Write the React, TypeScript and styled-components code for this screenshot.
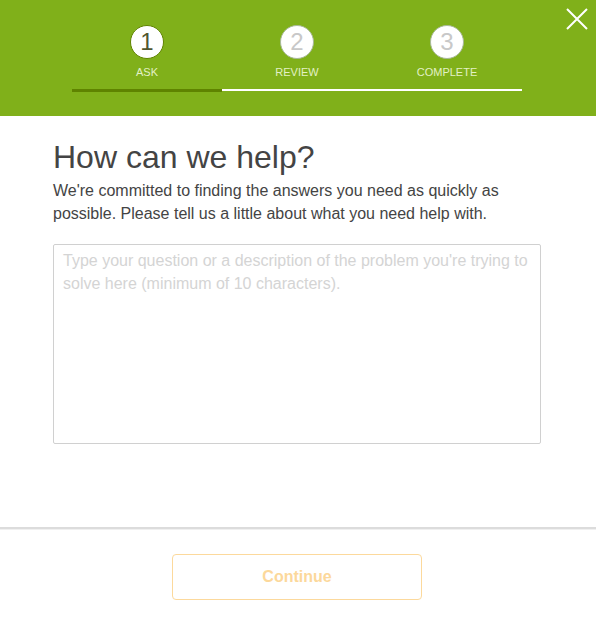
import React, { useState } from 'react'
import styled, { createGlobalStyle } from 'styled-components'

const GlobalStyle = createGlobalStyle`
    html, body {
        margin: 0;
        padding: 0;
        background: #fff;
        font-family: "Liberation Sans", Arial, Helvetica, sans-serif;
    }
`

const steps = ['Ask', 'Review', 'Complete']

const Page = styled.div`
    width: 596px;
    height: 624px;
    display: flex;
    flex-direction: column;
    overflow: hidden;
`

const Header = styled.header`
    position: relative;
    height: 116px;
    background: #80b01a;
    padding: 25px 74px 0 72px;
    box-sizing: border-box;
`

const Close = styled.button`
    position: absolute;
    top: 7px;
    right: 7px;
    width: 24px;
    height: 24px;
    padding: 0;
    border: none;
    background: transparent;
    cursor: pointer;
`

const Steps = styled.ol`
    display: grid;
    grid-template-columns: repeat(3, 1fr);
    margin: 0;
    padding: 0;
    list-style: none;
`

const Step = styled.li<{ $active: boolean }>`
    display: flex;
    flex-direction: column;
    align-items: center;
    position: relative;
    padding-bottom: 10px;

    &::after {
        content: '';
        position: absolute;
        left: 0;
        right: 0;
        bottom: ${p => (p.$active ? '-3px' : '-2px')};
        height: ${p => (p.$active ? '3px' : '2px')};
        background: ${p => (p.$active ? '#5f8300' : '#ffffff')};
    }
`

const Circle = styled.span<{ $active: boolean }>`
    width: 32px;
    height: 32px;
    border-radius: 50%;
    background: #fff;
    border: 1px solid ${p => (p.$active ? '#5f8300' : '#a9b99a')};
    display: flex;
    align-items: center;
    justify-content: center;
    font-size: 24px;
    line-height: 1;
    color: ${p => (p.$active ? '#50562f' : '#c8c8c8')};
`

const Label = styled.span`
    margin-top: 7px;
    font-size: 11px;
    line-height: 13px;
    text-transform: uppercase;
    color: #e3f1c6;
`

const Main = styled.main`
    flex: 1;
    padding: 23px 55px 0 53px;
`

const Title = styled.h1`
    margin: 0;
    font-size: 32px;
    font-weight: normal;
    line-height: 36px;
    color: #444;
`

const Intro = styled.p`
    margin: 4px 0 0;
    font-size: 16px;
    line-height: 23px;
    color: #444;
`

const Question = styled.textarea`
    display: block;
    margin-top: 19px;
    width: 488px;
    height: 200px;
    box-sizing: border-box;
    padding: 4px 9px;
    border: 1px solid #d0d0d0;
    border-radius: 2px;
    resize: none;
    font-family: inherit;
    font-size: 16px;
    line-height: 23px;
    color: #444;
    outline: none;

    &::placeholder {
        color: #d4d4d4;
    }
`

const Footer = styled.footer`
    height: 97px;
    border-top: 2px solid #dcdcdc;
    box-shadow: inset 0 1px 0 #f0f0f0;
    display: flex;
    justify-content: center;
    padding: 25px 2px 0 0;
    box-sizing: border-box;
`

const ContinueButton = styled.button`
    width: 250px;
    height: 46px;
    border: 1px solid #fcd99c;
    border-radius: 4px;
    background: #fff;
    font-family: inherit;
    font-size: 16px;
    font-weight: bold;
    color: #fcd89b;
    cursor: default;
`

const App = () => {
    const [text, setText] = useState('')

    return (
        <Page>
            <GlobalStyle />
            <Header>
                <Steps>
                    {steps.map((step, index) => (
                        <Step key={step} $active={index === 0}>
                            <Circle $active={index === 0}>{index + 1}</Circle>
                            <Label>{step}</Label>
                        </Step>
                    ))}
                </Steps>
                <Close aria-label="Close">
                    <svg width="24" height="24" viewBox="0 0 24 24">
                        <path d="M2 2 L22 22 M22 2 L2 22" stroke="#fff" strokeWidth="2" />
                    </svg>
                </Close>
            </Header>
            <Main>
                <Title>How can we help?</Title>
                <Intro>
                    We're committed to finding the answers you need as quickly as possible. Please tell us a little about what you need help with.
                </Intro>
                <Question
                    value={text}
                    onChange={e => setText(e.target.value)}
                    placeholder="Type your question or a description of the problem you're trying to solve here (minimum of 10 characters)."
                />
            </Main>
            <Footer>
                <ContinueButton disabled={text.length < 10}>Continue</ContinueButton>
            </Footer>
        </Page>
    )
}

export default App
